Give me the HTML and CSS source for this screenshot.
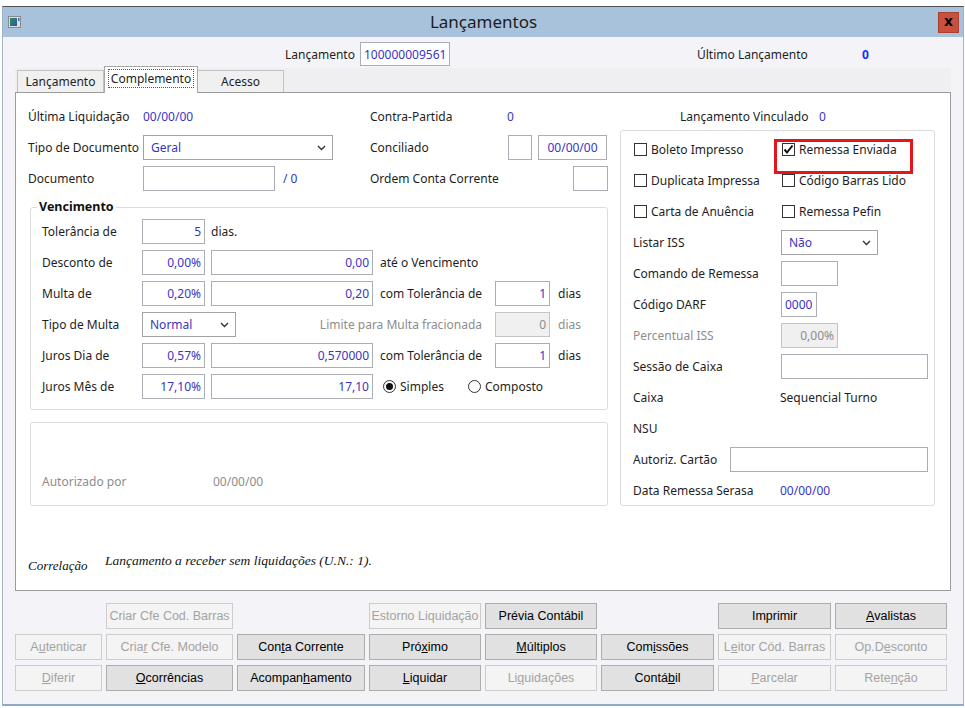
FILE: index.html
```html
<!DOCTYPE html>
<html lang="pt">
<head>
<meta charset="utf-8">
<title>Lançamentos</title>
<link rel="stylesheet" href="styles.css">
</head>
<body>
<div class="window">
  <div class="titlebar">
    <span class="appicon">
      <svg width="13" height="12" viewBox="0 0 13 12">
        <defs><linearGradient id="g" x1="0" y1="0" x2="1" y2="1"><stop offset="0" stop-color="#2e8f5a"/><stop offset="1" stop-color="#2a55a8"/></linearGradient></defs>
        <rect x="0.5" y="0.5" width="12" height="11" fill="#dcdcdc" stroke="#8a8a8a"/>
        <rect x="2" y="2" width="7" height="8" fill="url(#g)"/>
        <rect x="10" y="2" width="1.5" height="3" fill="#3a6fb0"/>
      </svg>
    </span>
    <span class="title">Lançamentos</span>
    <span class="close">x</span>
  </div>
  <div class="wbody">
    <div class="toprow">
      <span class="tl1">Lançamento</span>
      <span class="fld val w90">100000009561</span>
      <span class="tl2">Último Lançamento</span>
      <span class="bigzero">0</span>
    </div>
    <div class="tabs">
      <div class="tab">Lançamento</div>
      <div class="tab active"><span class="focus">Complemento</span></div>
      <div class="tab last">Acesso</div>
    </div>
    <div class="panel">
      <div class="leftcol">
        <div class="row">
          <span class="c1">Última Liquidação</span>
          <span class="c2 val">00/00/00</span>
          <span class="c3a">Contra-Partida</span>
          <span class="val">0</span>
        </div>
        <div class="row">
          <span class="c1">Tipo de Documento</span>
          <span class="c2"><span class="sel w190"><span class="val">Geral</span><svg class="chev" width="9" height="6" viewBox="0 0 9 6"><polyline points="1,1 4.5,4.5 8,1" fill="none" stroke="#333" stroke-width="1.4"/></svg></span></span>
          <span class="c3b">Conciliado</span>
          <span class="fld w24"></span>
          <span class="fld val w69 ctr ml6">00/00/00</span>
        </div>
        <div class="row">
          <span class="c1">Documento</span>
          <span class="c2"><span class="fld w132"></span><span class="val slash">/ 0</span></span>
          <span class="c3c">Ordem Conta Corrente</span>
          <span class="fld w35"></span>
        </div>

        <fieldset class="venc">
          <legend>Vencimento</legend>
          <div class="vrow">
            <span class="vl">Tolerância de</span>
            <span class="fld num val w63">5</span>
            <span class="ml6">dias.</span>
          </div>
          <div class="vrow">
            <span class="vl">Desconto de</span>
            <span class="fld num val w63">0,00%</span>
            <span class="fld num val w162 ml6">0,00</span>
            <span class="ml7">até o Vencimento</span>
          </div>
          <div class="vrow">
            <span class="vl">Multa de</span>
            <span class="fld num val w63">0,20%</span>
            <span class="fld num val w162 ml6">0,20</span>
            <span class="ml7 w115">com Tolerância de</span>
            <span class="fld num val w55">1</span>
            <span class="ml8">dias</span>
          </div>
          <div class="vrow">
            <span class="vl">Tipo de Multa</span>
            <span class="sel w94"><span class="val">Normal</span><svg class="chev" width="9" height="6" viewBox="0 0 9 6"><polyline points="1,1 4.5,4.5 8,1" fill="none" stroke="#333" stroke-width="1.4"/></svg></span>
            <span class="gray limite">Limite para Multa fracionada</span>
            <span class="fld num dis w55">0</span>
            <span class="ml8 gray">dias</span>
          </div>
          <div class="vrow">
            <span class="vl">Juros Dia de</span>
            <span class="fld num val w63">0,57%</span>
            <span class="fld num val w162 ml6">0,570000</span>
            <span class="ml7 w115">com Tolerância de</span>
            <span class="fld num val w55">1</span>
            <span class="ml8">dias</span>
          </div>
          <div class="vrow">
            <span class="vl">Juros Mês de</span>
            <span class="fld num val w63">17,10%</span>
            <span class="fld num val w162 ml6">17,10</span>
            <span class="radio r1"><span class="rd on"></span>Simples</span>
            <span class="radio"><span class="rd"></span>Composto</span>
          </div>
        </fieldset>

        <div class="autbox">
          <span class="gray aut1">Autorizado por</span>
          <span class="gray">00/00/00</span>
        </div>
      </div>

      <div class="rightcol">
        <div class="row vinc">
          <span class="vincl">Lançamento Vinculado</span>
          <span class="val">0</span>
        </div>
        <div class="rgroup">
          <div class="row">
            <span class="rc"><span class="cb"></span>Boleto Impresso</span>
            <span class="rc hl"><span class="cb"><svg width="11" height="11" viewBox="0 0 11 11"><polyline points="1.5,5.5 4,8.5 9.5,1.5" fill="none" stroke="#111" stroke-width="2"/></svg></span>Remessa Enviada</span>
          </div>
          <div class="row">
            <span class="rc"><span class="cb"></span>Duplicata Impressa</span>
            <span class="rc"><span class="cb"></span>Código Barras Lido</span>
          </div>
          <div class="row">
            <span class="rc"><span class="cb"></span>Carta de Anuência</span>
            <span class="rc"><span class="cb"></span>Remessa Pefin</span>
          </div>
          <div class="row">
            <span class="rl">Listar ISS</span>
            <span class="sel w97"><span class="val">Não</span><svg class="chev" width="9" height="6" viewBox="0 0 9 6"><polyline points="1,1 4.5,4.5 8,1" fill="none" stroke="#333" stroke-width="1.4"/></svg></span>
          </div>
          <div class="row">
            <span class="rl">Comando de Remessa</span>
            <span class="fld w57"></span>
          </div>
          <div class="row">
            <span class="rl">Código DARF</span>
            <span class="fld val w36">0000</span>
          </div>
          <div class="row">
            <span class="rl gray">Percentual ISS</span>
            <span class="fld num dis w57">0,00%</span>
          </div>
          <div class="row">
            <span class="rl">Sessão de Caixa</span>
            <span class="fld w147"></span>
          </div>
          <div class="row">
            <span class="rl">Caixa</span>
            <span class="seq">Sequencial Turno</span>
          </div>
          <div class="row">
            <span class="rl">NSU</span>
          </div>
          <div class="row">
            <span class="rl2">Autoriz. Cartão</span>
            <span class="fld w198"></span>
          </div>
          <div class="row">
            <span class="rl">Data Remessa Serasa</span>
            <span class="val seq">00/00/00</span>
          </div>
        </div>
      </div>

      <div class="correl">
        <span class="corr1">Correlação</span>
        <span class="corr2">Lançamento a receber sem liquidações (U.N.: 1).</span>
      </div>
    </div>

    <div class="buttons">
      <span class="empty"></span>
      <span class="btn dis">Criar Cfe Cod. Barras</span>
      <span class="empty"></span>
      <span class="btn dis">Estorno Liquidação</span>
      <span class="btn">Prévia Contábil</span>
      <span class="empty"></span>
      <span class="btn">Imprimir</span>
      <span class="btn"><u>A</u>valistas</span>

      <span class="btn dis">A<u>u</u>tenticar</span>
      <span class="btn dis">Cria<u>r</u> Cfe. Modelo</span>
      <span class="btn">Con<u>t</u>a Corrente</span>
      <span class="btn">Pró<u>x</u>imo</span>
      <span class="btn"><u>M</u>últiplos</span>
      <span class="btn">Com<u>i</u>ssões</span>
      <span class="btn dis">L<u>e</u>itor Cód. Barras</span>
      <span class="btn dis">Op.D<u>e</u>sconto</span>

      <span class="btn dis"><u>D</u>iferir</span>
      <span class="btn"><u>O</u>corrências</span>
      <span class="btn">Acompan<u>h</u>amento</span>
      <span class="btn"><u>L</u>iquidar</span>
      <span class="btn dis">Li<u>q</u>uidações</span>
      <span class="btn">Contá<u>b</u>il</span>
      <span class="btn dis"><u>P</u>arcelar</span>
      <span class="btn dis">Rete<u>n</u>ção</span>
    </div>
  </div>
</div>
</body>
</html>
```

FILE: styles.css
```css
* { box-sizing: border-box; }
html, body { margin: 0; padding: 0; background: #ffffff; }
body {
  width: 965px;
  height: 708px;
  overflow: hidden;
  font-family: "Noto Sans", "Open Sans", sans-serif;
  font-size: 12px;
  color: #1e1e1e;
}

.window {
  margin: 6px 0 0 2px;
  width: 962px;
  height: 700px;
  border: 1px solid #9fb3cb;
  border-top-color: #505050;
  border-bottom: 2px solid #8ea9c9;
  background: #f4f4f8;
}

.titlebar {
  height: 30px;
  background: #a9c2dc;
  display: grid;
  grid-template-columns: 1fr auto 1fr;
  align-items: center;
  padding: 0 4px 0 5px;
}
.appicon { display: flex; align-items: center; }
.title { font-size: 17px; color: #1c1c1c; line-height: 20px; }
.close {
  justify-self: end;
  width: 21px;
  height: 21px;
  background: #c9503f;
  border: 1px solid #a8402f;
  color: #000;
  font-family: "DejaVu Sans", sans-serif;
  font-weight: bold;
  font-size: 14px;
  line-height: 17px;
  text-align: center;
}

.wbody { padding: 5px 0 0 12px; }

.toprow { display: flex; align-items: center; height: 24px; }
.tl1 { margin-left: 270px; width: 75px; }
.tl2 { margin-left: 247px; width: 165px; }
.bigzero { color: #1530ff; font-weight: bold; }

.val { color: #3a35c2; }
.gray { color: #8d8d8d; }

.fld {
  display: inline-flex;
  align-items: center;
  height: 25px;
  border: 1px solid #aaadb3;
  background: #fff;
  padding: 0 3px;
  flex: none;
}
.toprow .fld { height: 24px; }
.fld.num { justify-content: flex-end; }
.fld.ctr { justify-content: center; }
.fld.dis { background: #f0f0f0; border-color: #c4c4c4; color: #8d8d8d; }

.sel {
  display: inline-flex;
  align-items: center;
  justify-content: space-between;
  height: 25px;
  border: 1px solid #a3a3a3;
  background: #fff;
  padding: 0 6px 0 7px;
  flex: none;
}
.chev { display: block; }

.w24 { width: 24px; } .w35 { width: 35px; } .w36 { width: 36px; }
.w55 { width: 55px; } .w57 { width: 57px; } .w63 { width: 63px; }
.w69 { width: 69px; } .w90 { width: 90px; } .w94 { width: 94px; }
.w97 { width: 97px; } .w115 { width: 115px; } .w132 { width: 132px; }
.w147 { width: 147px; } .w162 { width: 162px; } .w190 { width: 190px; }
.w198 { width: 198px; }
.ml6 { margin-left: 6px; } .ml7 { margin-left: 7px; } .ml8 { margin-left: 8px; }

.tabs {
  display: flex;
  align-items: flex-end;
  height: 26px;
  padding-left: 2px;
  width: 936px;
  background: linear-gradient(#f4f4f8 0 2px, #efeff1 2px);
}
.tab {
  width: 87px;
  height: 22px;
  border: 1px solid #c2c2c2;
  border-bottom: none;
  background: #f0f0f0;
  display: flex;
  align-items: center;
  justify-content: center;
  padding-bottom: 1px;
}
.tab.active {
  width: 94px;
  height: 27px;
  background: #fff;
  border-color: #a9a9a9;
  margin-bottom: -1px;
  position: relative;
  z-index: 1;
  padding-bottom: 4px;
}
.tab.last { margin-left: -1px; }
.focus { border: 1px dotted #555; padding: 0 2px; line-height: 17px; }

.panel {
  width: 936px;
  height: 499px;
  background: #fff;
  border: 1px solid #9b9b9b;
  padding: 11px 0 0 12px;
  display: grid;
  grid-template-columns: 580px 315px;
  column-gap: 12px;
  align-content: start;
}

.row { display: flex; align-items: center; height: 25px; margin-bottom: 6px; }
.row:last-child { margin-bottom: 0; }
.leftcol > .row:nth-child(3) { margin-bottom: 0; }
.c1 { width: 115px; flex: none; }
.c2 { width: 227px; flex: none; display: flex; align-items: center; }
.c3a { width: 137px; }
.c3b { width: 138px; }
.c3c { width: 203px; }
.slash { margin-left: 8px; }

.venc {
  margin: 8px 0 0 2px;
  width: 578px;
  border: 1px solid #dcdcdc;
  border-radius: 3px;
  padding: 4px 10px 10px 11px;
  min-width: 0;
}
.venc legend {
  font-weight: bold;
  font-size: 12.5px;
  line-height: 16px;
  padding: 0 2px;
  margin-left: -5px;
  color: #111;
}
.vrow { display: flex; align-items: center; height: 25px; margin-bottom: 6px; }
.vrow:last-child { margin-bottom: 0; }
.vl { width: 100px; flex: none; }
.limite { width: 259px; text-align: right; padding-right: 13px; }

.radio { display: inline-flex; align-items: center; }
.radio.r1 { margin-left: 10px; width: 85px; }
.rd {
  width: 13px; height: 13px;
  border: 1px solid #333;
  border-radius: 50%;
  background: #fff;
  margin-right: 4px;
  display: inline-flex;
  align-items: center;
  justify-content: center;
}
.rd.on::after {
  content: "";
  width: 7px; height: 7px;
  border-radius: 50%;
  background: #111;
}

.autbox {
  margin: 12px 0 0 2px;
  width: 578px;
  height: 84px;
  border: 1px solid #dcdcdc;
  border-radius: 3px;
  display: flex;
  align-items: flex-end;
  padding: 0 0 15px 11px;
  line-height: 16px;
}
.aut1 { width: 171px; }

.row.vinc { padding-left: 60px; margin-bottom: 0; }
.vincl { width: 139px; }

.rgroup {
  margin-top: 1px;
  border: 1px solid #dcdcdc;
  border-radius: 3px;
  padding: 6px 6px 2px 12px;
}
.rc { width: 148px; display: flex; align-items: center; flex: none; }
.rc .cb { margin-left: 1px; margin-right: 4px; }
.cb {
  width: 13px; height: 13px;
  border: 1px solid #333;
  background: #fff;
  display: inline-flex;
  align-items: center;
  justify-content: center;
  flex: none;
}
.cb svg { display: block; }
.hl { position: relative; }
.hl::after {
  content: "";
  position: absolute;
  left: -7px;
  top: -2px;
  width: 133px;
  height: 29px;
  border: 3px solid #e5151c;
}
.rl { width: 148px; flex: none; }
.rl2 { width: 97px; flex: none; }
.seq { margin-left: -1px; }

.correl {
  grid-column: 1 / span 2;
  margin-top: 47px;
  display: flex;
  align-items: flex-start;
  font-family: "Liberation Serif", serif;
  font-style: italic;
  color: #111;
  line-height: 16px;
}
.corr1 { width: 77px; font-size: 13px; padding-top: 5px; }
.corr2 { font-size: 13.5px; }

.buttons {
  margin-top: 12px;
  display: grid;
  grid-template-columns: 87px 127px 128px 112px 112px 113px 113px 112px;
  grid-auto-rows: 26px;
  column-gap: 4px;
  row-gap: 5px;
}
.btn {
  display: block;
  text-align: center;
  line-height: 24px;
  border: 1px solid #adadad;
  background: #e1e1e1;
  font-family: "Liberation Sans", Arial, sans-serif;
  font-size: 12.5px;
  color: #000;
  white-space: nowrap;
}
.btn.dis {
  background: #f4f4f4;
  border-color: #cccccc;
  color: #a3a3a3;
}
.btn u { text-underline-offset: 1px; }
```
